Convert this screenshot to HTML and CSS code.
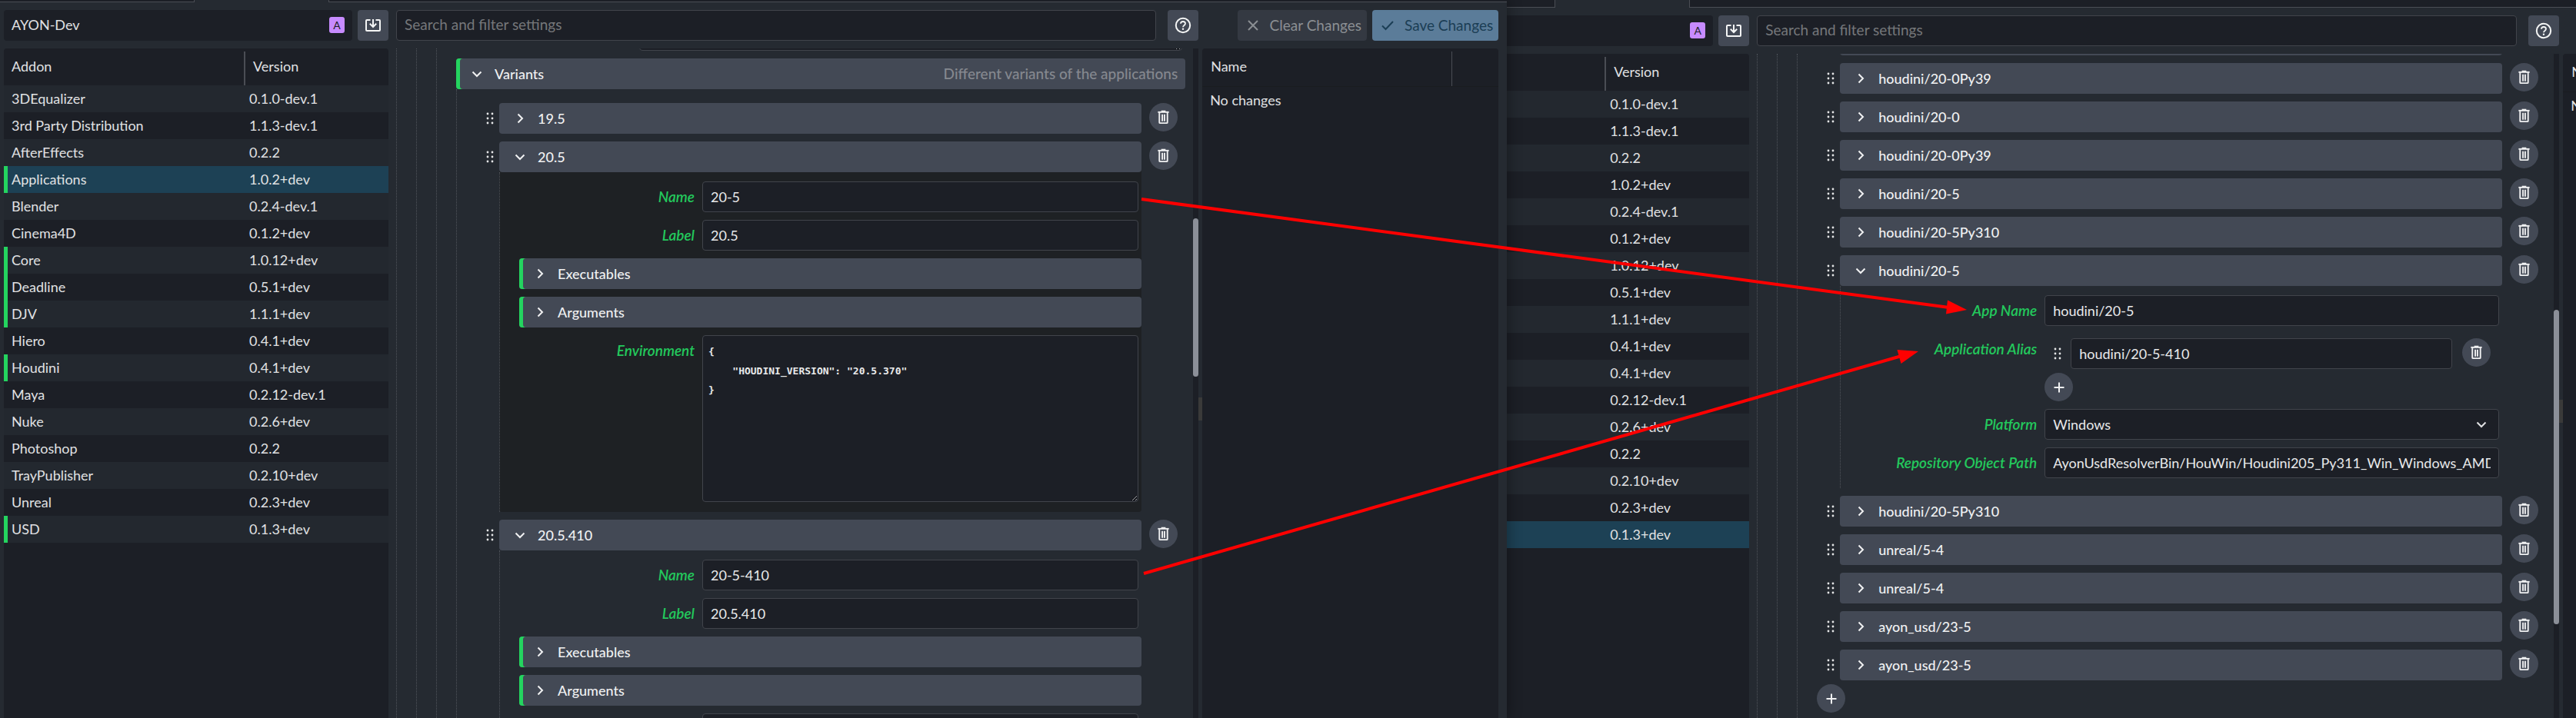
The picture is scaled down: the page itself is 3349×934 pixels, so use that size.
FILE: index.html
```html
<!DOCTYPE html>
<html lang="en">
<head>
<meta charset="utf-8">
<title>AYON settings</title>
<link rel="stylesheet" href="styles.css">
</head>
<body>
<svg class="sprite" aria-hidden="true">
  <symbol id="i-right" viewBox="0 0 20 20"><path d="M7.5 4.5l5.5 5.5-5.5 5.5" fill="none" stroke="currentColor" stroke-width="2"/></symbol>
  <symbol id="i-down" viewBox="0 0 20 20"><path d="M4.5 7.5l5.5 5.5 5.5-5.5" fill="none" stroke="currentColor" stroke-width="2"/></symbol>
  <symbol id="i-drag" viewBox="0 0 16 20"><g fill="currentColor"><circle cx="5" cy="4" r="1.4"/><circle cx="11" cy="4" r="1.4"/><circle cx="5" cy="10" r="1.4"/><circle cx="11" cy="10" r="1.4"/><circle cx="5" cy="16" r="1.4"/><circle cx="11" cy="16" r="1.4"/></g></symbol>
  <symbol id="i-trash" viewBox="0 0 20 20"><path d="M2.500 3h15" fill="none" stroke="currentColor" stroke-width="2"/><path d="M7 1.500h6" fill="none" stroke="currentColor" stroke-width="1.500"/><path d="M4.500 3.500V17q0 1 1 1h9q1 0 1-1V3.500" fill="none" stroke="currentColor" stroke-width="2"/><path d="M8.500 6v9.500M11.500 6v9.500" fill="none" stroke="currentColor" stroke-width="2"/></symbol>
  <symbol id="i-plus" viewBox="0 0 20 20"><path d="M10 3.500v13M3.500 10h13" fill="none" stroke="currentColor" stroke-width="2"/></symbol>
  <symbol id="i-import" viewBox="0 0 22 22"><path d="M7.500 4H3q-1 0-1 1v12q0 1 1 1h16q1 0 1-1V5q0-1-1-1h-4.500" fill="none" stroke="currentColor" stroke-width="2"/><path d="M11 3v9.500M6.800 8.800L11 13l4.200-4.200" fill="none" stroke="currentColor" stroke-width="2"/></symbol>
  <symbol id="i-help" viewBox="0 0 22 22"><circle cx="11" cy="11" r="9.200" fill="none" stroke="currentColor" stroke-width="2"/><path d="M8 8.800q0-2.800 3-2.800t3 2.600q0 1.300-1.500 2.300T11 13.200" fill="none" stroke="currentColor" stroke-width="1.800"/><circle cx="11" cy="15.800" r="1.200" fill="currentColor"/></symbol>
  <symbol id="i-close" viewBox="0 0 20 20"><path d="M4 4l12 12M16 4L4 16" fill="none" stroke="currentColor" stroke-width="2"/></symbol>
  <symbol id="i-check" viewBox="0 0 20 20"><path d="M3 10.500l4.500 4.500L17 5" fill="none" stroke="currentColor" stroke-width="2"/></symbol>
</svg>

<div class="desktop">

<section class="window front">
  <div class="tabstrip"><span class="tab-rest lead"></span><span class="tab-active"></span><span class="tab-rest"></span></div>
  <div class="panes">
    <aside class="addons">
      <div class="toolbar">
        <button class="project">AYON-Dev <span class="badge">A</span></button>
        <button class="icon-btn" aria-label="Import"><svg class="ic22"><use href="#i-import"/></svg></button>
      </div>
      <div class="card">
        <table class="addon-table">
          <thead><tr><th class="col-name">Addon</th><th><span class="sep">Version</span></th></tr></thead>
          <tbody>
            <tr><td>3DEqualizer</td><td>0.1.0-dev.1</td></tr>
            <tr><td>3rd Party Distribution</td><td>1.1.3-dev.1</td></tr>
            <tr><td>AfterEffects</td><td>0.2.2</td></tr>
            <tr class="changed selected"><td>Applications</td><td>1.0.2+dev</td></tr>
            <tr><td>Blender</td><td>0.2.4-dev.1</td></tr>
            <tr><td>Cinema4D</td><td>0.1.2+dev</td></tr>
            <tr class="changed"><td>Core</td><td>1.0.12+dev</td></tr>
            <tr class="changed"><td>Deadline</td><td>0.5.1+dev</td></tr>
            <tr class="changed"><td>DJV</td><td>1.1.1+dev</td></tr>
            <tr><td>Hiero</td><td>0.4.1+dev</td></tr>
            <tr class="changed"><td>Houdini</td><td>0.4.1+dev</td></tr>
            <tr><td>Maya</td><td>0.2.12-dev.1</td></tr>
            <tr><td>Nuke</td><td>0.2.6+dev</td></tr>
            <tr><td>Photoshop</td><td>0.2.2</td></tr>
            <tr><td>TrayPublisher</td><td>0.2.10+dev</td></tr>
            <tr><td>Unreal</td><td>0.2.3+dev</td></tr>
            <tr class="changed"><td>USD</td><td>0.1.3+dev</td></tr>
          </tbody>
        </table>
      </div>
    </aside>

    <main class="settings">
      <div class="toolbar">
        <input class="search" type="search" placeholder="Search and filter settings" aria-label="Search and filter settings">
        <button class="icon-btn" aria-label="Help"><svg class="ic22"><use href="#i-help"/></svg></button>
      </div>
      <div class="scroller">
        <div class="content">
          <div class="level"><div class="level"><div class="level last">
            <div class="row scrolled-field"><label class="label" for="a-env0"></label><textarea id="a-env0" class="field area"></textarea></div>
            <button class="group changed"><svg class="ic20"><use href="#i-down"/></svg><span>Variants</span><span class="hint">Different variants of the applications</span></button>
            <div class="level array variants">
              <div class="item">
                <svg class="drag"><use href="#i-drag"/></svg>
                <div class="box"><button class="group"><svg class="ic20"><use href="#i-right"/></svg><span>19.5</span></button></div>
                <button class="round" aria-label="Delete"><svg class="ic18"><use href="#i-trash"/></svg></button>
              </div>
              <div class="item">
                <svg class="drag"><use href="#i-drag"/></svg>
                <div class="box hovered">
                  <button class="group"><svg class="ic20"><use href="#i-down"/></svg><span>20.5</span></button>
                  <div class="level body">
                    <div class="row"><label class="label" for="a-name1">Name</label><input id="a-name1" class="field" value="20-5"></div>
                    <div class="row"><label class="label" for="a-label1">Label</label><input id="a-label1" class="field" value="20.5"></div>
                    <button class="group changed"><svg class="ic20"><use href="#i-right"/></svg><span>Executables</span></button>
                    <button class="group changed"><svg class="ic20"><use href="#i-right"/></svg><span>Arguments</span></button>
                    <div class="row"><label class="label" for="a-env1">Environment</label><textarea id="a-env1" class="field area" spellcheck="false">{
    "HOUDINI_VERSION": "20.5.370"
}</textarea></div>
                  </div>
                </div>
                <button class="round" aria-label="Delete"><svg class="ic18"><use href="#i-trash"/></svg></button>
              </div>
              <div class="item">
                <svg class="drag"><use href="#i-drag"/></svg>
                <div class="box">
                  <button class="group"><svg class="ic20"><use href="#i-down"/></svg><span>20.5.410</span></button>
                  <div class="level body">
                    <div class="row"><label class="label" for="a-name2">Name</label><input id="a-name2" class="field" value="20-5-410"></div>
                    <div class="row"><label class="label" for="a-label2">Label</label><input id="a-label2" class="field" value="20.5.410"></div>
                    <button class="group changed"><svg class="ic20"><use href="#i-right"/></svg><span>Executables</span></button>
                    <button class="group changed"><svg class="ic20"><use href="#i-right"/></svg><span>Arguments</span></button>
                    <div class="row"><label class="label" for="a-env2"></label><textarea id="a-env2" class="field area"></textarea></div>
                  </div>
                </div>
                <button class="round" aria-label="Delete"><svg class="ic18"><use href="#i-trash"/></svg></button>
              </div>
            </div>
          </div></div></div>
        </div>
        <div class="track"><span class="space-top-a"></span><span class="thumb thumb-a"></span></div>
      </div>
    </main>

    <div class="gutter"><span class="grip"></span></div>

    <aside class="changes">
      <div class="toolbar end">
        <button class="action clear" disabled><svg class="ic20"><use href="#i-close"/></svg>Clear Changes</button>
        <button class="action save" disabled><svg class="ic20"><use href="#i-check"/></svg>Save Changes</button>
      </div>
      <div class="card">
        <div class="changes-head"><span>Name</span><span class="bar"></span></div>
        <div class="changes-empty">No changes</div>
      </div>
    </aside>
  </div>
</section>

<section class="window back">
  <div class="tabstrip"><span class="tab-rest lead"></span><span class="tab-active"></span><span class="tab-rest"></span></div>
  <div class="panes">
    <aside class="addons">
      <div class="toolbar">
        <button class="project" aria-label="Project"><span class="badge">A</span></button>
        <button class="icon-btn" aria-label="Import"><svg class="ic22"><use href="#i-import"/></svg></button>
      </div>
      <div class="card">
        <table class="addon-table">
          <thead><tr><th class="col-name"></th><th><span class="sep">Version</span></th></tr></thead>
          <tbody>
            <tr><td></td><td>0.1.0-dev.1</td></tr>
            <tr><td></td><td>1.1.3-dev.1</td></tr>
            <tr><td></td><td>0.2.2</td></tr>
            <tr><td></td><td>1.0.2+dev</td></tr>
            <tr><td></td><td>0.2.4-dev.1</td></tr>
            <tr><td></td><td>0.1.2+dev</td></tr>
            <tr><td></td><td>1.0.12+dev</td></tr>
            <tr><td></td><td>0.5.1+dev</td></tr>
            <tr><td></td><td>1.1.1+dev</td></tr>
            <tr><td></td><td>0.4.1+dev</td></tr>
            <tr><td></td><td>0.4.1+dev</td></tr>
            <tr><td></td><td>0.2.12-dev.1</td></tr>
            <tr><td></td><td>0.2.6+dev</td></tr>
            <tr><td></td><td>0.2.2</td></tr>
            <tr><td></td><td>0.2.10+dev</td></tr>
            <tr><td></td><td>0.2.3+dev</td></tr>
            <tr class="selected"><td></td><td>0.1.3+dev</td></tr>
          </tbody>
        </table>
      </div>
    </aside>

    <main class="settings">
      <div class="toolbar">
        <input class="search" type="search" placeholder="Search and filter settings" aria-label="Search and filter settings">
        <button class="icon-btn" aria-label="Help"><svg class="ic22"><use href="#i-help"/></svg></button>
      </div>
      <div class="scroller">
        <div class="content">
          <div class="level"><div class="level"><div class="level last array list">
            <div class="item scrolled-item"><svg class="drag"></svg><div class="box"><button class="group" aria-label="Previous"></button></div><span class="round-space"></span></div>
            <div class="item"><svg class="drag"><use href="#i-drag"/></svg><div class="box"><button class="group"><svg class="ic20"><use href="#i-right"/></svg><span>houdini/20-0Py39</span></button></div><button class="round" aria-label="Delete"><svg class="ic18"><use href="#i-trash"/></svg></button></div>
            <div class="item"><svg class="drag"><use href="#i-drag"/></svg><div class="box"><button class="group"><svg class="ic20"><use href="#i-right"/></svg><span>houdini/20-0</span></button></div><button class="round" aria-label="Delete"><svg class="ic18"><use href="#i-trash"/></svg></button></div>
            <div class="item"><svg class="drag"><use href="#i-drag"/></svg><div class="box"><button class="group"><svg class="ic20"><use href="#i-right"/></svg><span>houdini/20-0Py39</span></button></div><button class="round" aria-label="Delete"><svg class="ic18"><use href="#i-trash"/></svg></button></div>
            <div class="item"><svg class="drag"><use href="#i-drag"/></svg><div class="box"><button class="group"><svg class="ic20"><use href="#i-right"/></svg><span>houdini/20-5</span></button></div><button class="round" aria-label="Delete"><svg class="ic18"><use href="#i-trash"/></svg></button></div>
            <div class="item"><svg class="drag"><use href="#i-drag"/></svg><div class="box"><button class="group"><svg class="ic20"><use href="#i-right"/></svg><span>houdini/20-5Py310</span></button></div><button class="round" aria-label="Delete"><svg class="ic18"><use href="#i-trash"/></svg></button></div>
            <div class="item">
              <svg class="drag"><use href="#i-drag"/></svg>
              <div class="box">
                <button class="group"><svg class="ic20"><use href="#i-down"/></svg><span>houdini/20-5</span></button>
                <div class="level body">
                  <div class="row"><label class="label" for="b-app">App Name</label><input id="b-app" class="field" value="houdini/20-5"></div>
                  <div class="row"><label class="label" for="b-alias">Application Alias</label>
                    <div class="alias">
                      <div class="alias-item"><svg class="drag"><use href="#i-drag"/></svg><input id="b-alias" class="field" value="houdini/20-5-410"><button class="round" aria-label="Delete"><svg class="ic18"><use href="#i-trash"/></svg></button></div>
                      <button class="round" aria-label="Add alias"><svg class="ic20"><use href="#i-plus"/></svg></button>
                    </div>
                  </div>
                  <div class="row"><label class="label" for="b-platform">Platform</label><div class="select"><select id="b-platform" class="field"><option>Windows</option></select><svg class="ic20 caret"><use href="#i-down"/></svg></div></div>
                  <div class="row"><label class="label" for="b-repo">Repository Object Path</label><input id="b-repo" class="field" value="AyonUsdResolverBin/HouWin/Houdini205_Py311_Win_Windows_AMD64.zip"></div>
                </div>
              </div>
              <button class="round" aria-label="Delete"><svg class="ic18"><use href="#i-trash"/></svg></button>
            </div>
            <div class="item"><svg class="drag"><use href="#i-drag"/></svg><div class="box"><button class="group"><svg class="ic20"><use href="#i-right"/></svg><span>houdini/20-5Py310</span></button></div><button class="round" aria-label="Delete"><svg class="ic18"><use href="#i-trash"/></svg></button></div>
            <div class="item"><svg class="drag"><use href="#i-drag"/></svg><div class="box"><button class="group"><svg class="ic20"><use href="#i-right"/></svg><span>unreal/5-4</span></button></div><button class="round" aria-label="Delete"><svg class="ic18"><use href="#i-trash"/></svg></button></div>
            <div class="item"><svg class="drag"><use href="#i-drag"/></svg><div class="box"><button class="group"><svg class="ic20"><use href="#i-right"/></svg><span>unreal/5-4</span></button></div><button class="round" aria-label="Delete"><svg class="ic18"><use href="#i-trash"/></svg></button></div>
            <div class="item"><svg class="drag"><use href="#i-drag"/></svg><div class="box"><button class="group"><svg class="ic20"><use href="#i-right"/></svg><span>ayon_usd/23-5</span></button></div><button class="round" aria-label="Delete"><svg class="ic18"><use href="#i-trash"/></svg></button></div>
            <div class="item"><svg class="drag"><use href="#i-drag"/></svg><div class="box"><button class="group"><svg class="ic20"><use href="#i-right"/></svg><span>ayon_usd/23-5</span></button></div><button class="round" aria-label="Delete"><svg class="ic18"><use href="#i-trash"/></svg></button></div>
            <button class="round add" aria-label="Add item"><svg class="ic20"><use href="#i-plus"/></svg></button>
          </div></div></div>
        </div>
        <div class="track"><span class="space-top-b"></span><span class="thumb thumb-b"></span></div>
      </div>
    </main>

    <div class="gutter"><span class="grip"></span></div>

    <aside class="changes">
      <div class="toolbar"></div>
      <div class="card">
        <div class="changes-head"><span>N</span></div>
        <div class="changes-empty">N</div>
      </div>
    </aside>
  </div>
</section>

<svg class="arrows" viewBox="0 0 3349 934" preserveAspectRatio="xMinYMin meet" aria-hidden="true">
  <g stroke="#ff0000" stroke-width="4" fill="#ff0000">
    <path d="M1484 259L2534 400"/><path stroke="none" d="M2557 403L2532 390.500 2530 408.500z"/>
    <path d="M1487 746L2472 463"/><path stroke="none" d="M2494 457L2466.500 455 2471.500 473z"/>
  </g>
</svg>
</div>
</body>
</html>
```

FILE: styles.css
```css
:root {
  --bg: #252a31;
  --dark: #1c1f26;
  --bar: #434955;
  --line: #41444b;
  --green: #24d45f;
  --text: #e0e1e3;
}

* { box-sizing: border-box; }

body {
  margin: 0;
  background: var(--bg);
  color: var(--text);
  font: 18px/24px Lato, "Noto Sans", sans-serif;
}

button, input, select, textarea {
  font: inherit;
  color: inherit;
  border: 0;
  margin: 0;
}

button { cursor: pointer; }

.sprite { display: none; }
.ic18 { width: 19px; height: 19px; flex: none; }
.ic20 { width: 20px; height: 20px; flex: none; }
.ic22 { width: 22px; height: 22px; flex: none; }

.desktop {
  position: relative;
  display: flex;
  height: 100vh;
  overflow: hidden;
}

/* windows */
.window {
  display: flex;
  flex-direction: column;
  flex: 0 0 58.5%;
  background: var(--bg);
}
.front {
  z-index: 1;
  box-shadow: 2px 0 16px rgba(0, 0, 0, 0.35);
}
.back { margin-left: -190px; }

.tabstrip { display: flex; height: 3px; }
.back .tabstrip { height: 10px; }
.tab-rest {
  flex: 1;
  background: var(--dark);
  border: 0 solid #4a4d54;
  border-width: 0 0 1px 1px;
}
.tab-rest.lead { flex: 0 0 253px; border-width: 0 1px 1px 0; }
.tab-active { flex: 0 0 174px; }

.panes {
  display: flex;
  flex: 1;
  min-height: 0;
  padding: 10px 11px 0 5px;
}

.toolbar {
  display: flex;
  height: 40px;
  margin-bottom: 10px;
}
.toolbar.end { justify-content: flex-end; gap: 7px; }

.card {
  flex: 1;
  background: var(--dark);
  border-radius: 4px 4px 0 0;
  overflow: hidden;
}

.icon-btn {
  display: grid;
  place-items: center;
  flex: 0 0 40px;
  padding: 0;
  border-radius: 4px;
  background: var(--bar);
  color: #f4f5f5;
}

/* addon column */
.addons {
  display: flex;
  flex-direction: column;
  flex: 0 0 500px;
  margin-right: 10px;
}
.addons .toolbar { gap: 7px; }
.project {
  display: flex;
  align-items: center;
  flex: 1;
  padding: 0 10px 2px;
  border-radius: 4px;
  background: var(--dark);
}
.badge {
  width: 20px;
  margin-left: auto;
  border-radius: 3px;
  background: #c78bff;
  color: #1c1f26;
  font-size: 14px;
  line-height: 21px;
  text-align: center;
}

.addon-table {
  width: 100%;
  border-collapse: collapse;
  table-layout: fixed;
}
.addon-table th {
  height: 48px;
  padding: 4px 0 0;
  font-weight: 400;
  text-align: left;
}
.addon-table .col-name { width: 312px; padding: 0 10px 2px; }
.sep {
  display: flex;
  align-items: center;
  height: 44px;
  padding: 0 0 6px 10px;
  border-left: 2px solid #4a4d54;
}
.addon-table td { height: 35px; padding: 0 7px 2px; }
.addon-table td:first-child { padding: 0 10px 2px; }
.addon-table tbody tr:nth-child(odd) { background: #23282f; }
.addon-table tbody tr.selected { background: #1d4155; }
.addon-table .changed td:first-child { box-shadow: inset 5px 0 var(--green); }

/* settings column */
.settings {
  display: flex;
  flex-direction: column;
  flex: 1;
  min-width: 0;
}
.settings .toolbar { gap: 15px; }
.search {
  flex: 1;
  min-width: 0;
  padding: 0 10px 2px;
  border: 1px solid var(--line);
  border-radius: 4px;
  background: var(--dark);
  font-size: 19px;
}
.search::placeholder { color: #75777a; opacity: 1; }

.scroller {
  display: flex;
  flex: 1;
  min-height: 0;
  overflow: hidden;
}
.content {
  display: flex;
  flex: 1;
  min-width: 0;
  padding-right: 10px;
}
.content > .level, .content > .level > .level { display: flex; }
.level {
  flex: 1;
  min-width: 0;
  padding-left: 25px;
  border-left: 1px dotted #50545b;
}
.last, .variants, .body {
  display: flex;
  flex-direction: column;
  gap: 10px;
}
.array { padding: 18px 10px 0 35px; }
.list { padding-top: 0; }

.group {
  display: flex;
  align-items: center;
  gap: 13px;
  width: 100%;
  height: 40px;
  flex: none;
  padding: 0 10px 0 17px;
  border-radius: 4px;
  background: var(--bar);
  color: #f0f1f2;
  font-weight: 500;
  text-align: left;
}
.group.changed { box-shadow: inset 5px 0 var(--green); }
.last > .group + .level { margin-top: -10px; }
.hint { margin-left: auto; color: #85888f; font-size: 19px; }

.item { display: flex; align-items: flex-start; flex: none; }
.drag { width: 16px; height: 20px; margin: 10px 4px 0 0; flex: none; color: #e4e5e6; }
.box { flex: 1; min-width: 0; border-radius: 4px; }
.hovered { background: #1e2124; }
.body { padding-top: 12px; padding-bottom: 13px; }

.round {
  display: grid;
  place-items: center;
  width: 37px;
  height: 37px;
  flex: none;
  padding: 0;
  border-radius: 50%;
  background: var(--bar);
  color: #f0f1f2;
}
.item > .round, .round-space { margin-left: 10px; }
.round-space { width: 37px; }
.add { margin: -5px 0 0 -10px; }

.row { display: flex; padding-right: 4px; flex: none; }
.label {
  flex: 0 0 228px;
  margin-right: 10px;
  font-size: 19px;
  line-height: 40px;
  text-align: right;
  font-style: italic;
  font-weight: 600;
  color: #23c85c;
}
.back .label { flex-basis: 230px; }
.field {
  flex: 1;
  min-width: 0;
  height: 40px;
  padding: 0 10px;
  border: 1px solid var(--line);
  border-radius: 4px;
  background: var(--dark);
  color: #e8e9ea;
}
.area {
  height: 217px;
  padding: 8px 7px;
  font: bold 13px/25px "DejaVu Sans Mono", monospace;
  white-space: pre;
  resize: vertical;
}

/* rows partly scrolled out above the viewport */
.scrolled-field { margin-top: -214px; }
.scrolled-item { margin-top: -38px; }

.alias { flex: 1; padding-top: 6px; }
.alias-item {
  display: flex;
  margin-bottom: 5px;
  padding: 0 11px 0 9px;
}
.alias-item .drag { margin-right: 9px; }
.alias-item .round { margin-left: 13px; }

.select { display: flex; flex: 1; position: relative; }
.select .field { appearance: none; }
.caret { position: absolute; top: 10px; right: 13px; pointer-events: none; }

.track {
  display: flex;
  flex-direction: column;
  flex: 0 0 7px;
  background: var(--dark);
}
.space-top-a { flex: 0 0 25.4%; }
.space-top-b { flex: 0 0 38.500%; }
.thumb { border-radius: 4px; background: #8b8f98; }
.thumb-a { flex: 0 0 23.600%; }
.thumb-b { flex: 0 0 47.400%; }

.gutter { flex: 0 0 5px; display: grid; align-items: center; padding-top: 116px; }
.grip { height: 30px; background: #3a3a39; }

/* pending changes column */
.changes { display: flex; flex-direction: column; flex: 0 0 385px; }
.action {
  display: flex;
  align-items: center;
  gap: 12px;
  padding: 0 7px 0 10px;
  border-radius: 4px;
  font-size: 19px;
}
.clear { background: #343942; color: #8b8f93; }
.save { background: #5b7c99; color: #1b3e55; }
.changes-head {
  display: flex;
  justify-content: space-between;
  height: 50px;
  padding: 4px 60px 0 11px;
  border-bottom: 1px solid #1a1c20;
  line-height: 38px;
}
.bar { align-self: stretch; width: 1px; background: #4a4d54; }
.changes-empty { padding: 5px 10px; }

/* annotation layer */
.arrows {
  position: absolute;
  inset: 0;
  width: 100%;
  height: 100%;
  z-index: 2;
  pointer-events: none;
}
```
